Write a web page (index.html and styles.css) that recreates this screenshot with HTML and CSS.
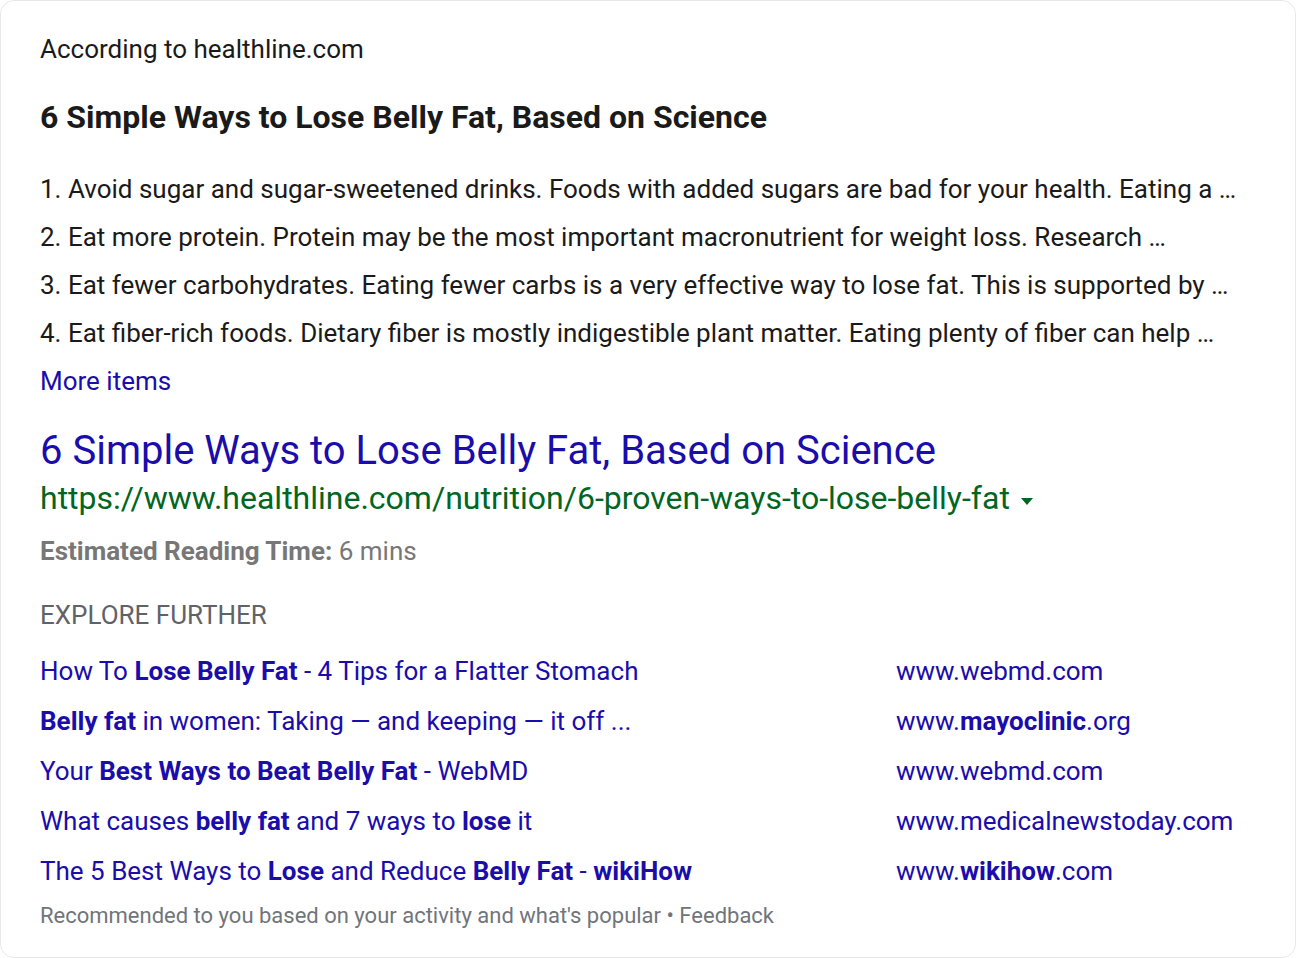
FILE: index.html
```html
<!DOCTYPE html>
<html lang="en">
<head>
<meta charset="utf-8">
<title>Featured snippet</title>
<link rel="stylesheet" href="styles.css">
</head>
<body>
<div class="card">
  <div class="source">According to healthline.com</div>
  <h2 class="snippet-title">6 Simple Ways to Lose Belly Fat, Based on Science</h2>
  <ol class="items">
    <li>1. Avoid sugar and sugar-sweetened drinks. Foods with added sugars are bad for your health. Eating a …</li>
    <li>2. Eat more protein. Protein may be the most important macronutrient for weight loss. Research …</li>
    <li>3. Eat fewer carbohydrates. Eating fewer carbs is a very effective way to lose fat. This is supported by …</li>
    <li>4. Eat fiber-rich foods. Dietary fiber is mostly indigestible plant matter. Eating plenty of fiber can help …</li>
  </ol>
  <a class="more" href="#">More items</a>
  <a class="result-title" href="#">6 Simple Ways to Lose Belly Fat, Based on Science</a>
  <div class="url">https://www.healthline.com/nutrition/6-proven-ways-to-lose-belly-fat<span class="caret"></span></div>
  <div class="reading"><b>Estimated Reading Time:</b> 6 mins</div>
  <div class="explore-head">EXPLORE FURTHER</div>
  <div class="explore">
    <a href="#">How To <b>Lose Belly Fat</b> - 4 Tips for a Flatter Stomach</a>
    <a href="#">www.webmd.com</a>
    <a href="#"><b>Belly fat</b> in women: Taking — and keeping — it off ...</a>
    <a href="#">www.<b>mayoclinic</b>.org</a>
    <a href="#">Your <b>Best Ways to Beat Belly Fat</b> - WebMD</a>
    <a href="#">www.webmd.com</a>
    <a href="#">What causes <b>belly fat</b> and 7 ways to <b>lose</b> it</a>
    <a href="#">www.medicalnewstoday.com</a>
    <a href="#">The 5 Best Ways to <b>Lose</b> and Reduce <b>Belly Fat</b> - <b>wikiHow</b></a>
    <a href="#">www.<b>wikihow</b>.com</a>
  </div>
  <div class="footer">Recommended to you based on your activity and what's popular • Feedback</div>
</div>
</body>
</html>
```

FILE: styles.css
```css
html, body {
  margin: 0;
  padding: 0;
  background: #ffffff;
}

body {
  font-family: Roboto, "Noto Sans", Arial, sans-serif;
  color: #1a1a1a;
}

.card {
  box-sizing: border-box;
  width: 1296px;
  height: 958px;
  border: 1px solid #e8e8e8;
  border-radius: 14px;
  padding: 24px 40px 0 39px;
  display: flex;
  flex-direction: column;
  align-items: flex-start;
}

.source {
  font-size: 26px;
  line-height: 48px;
}

.snippet-title {
  margin: 24px 0 0;
  font-size: 32px;
  font-weight: 700;
  line-height: 40px;
}

.items {
  list-style: none;
  margin: 28px 0 0;
  padding: 0;
}

.items li {
  font-size: 26px;
  line-height: 48px;
  white-space: nowrap;
}

a {
  text-decoration: none;
  color: #1a0dab;
}

.more {
  font-size: 26px;
  line-height: 48px;
}

.result-title {
  margin-top: 24px;
  font-size: 40px;
  line-height: 44px;
}

.url {
  font-size: 32px;
  line-height: 50px;
  color: #006621;
  display: flex;
  align-items: center;
}

.caret {
  display: inline-block;
  width: 0;
  height: 0;
  margin-left: 11px;
  margin-top: 6px;
  border-left: 6px solid transparent;
  border-right: 6px solid transparent;
  border-top: 7px solid #006621;
}

.reading {
  margin-top: 4px;
  font-size: 26px;
  line-height: 48px;
  color: #777777;
}

.reading b {
  font-weight: 700;
}

.explore-head {
  margin-top: 16px;
  font-size: 26px;
  line-height: 48px;
  color: #5f6368;
}

.explore {
  margin-top: 7px;
  display: grid;
  grid-template-columns: 856px auto;
  grid-auto-rows: 50px;
  align-items: center;
}

.explore a {
  font-size: 26px;
  line-height: 50px;
  white-space: nowrap;
}

.explore b {
  font-weight: 700;
}

.footer {
  margin-top: 6px;
  font-size: 22px;
  line-height: 28px;
  color: #70757a;
}
```
